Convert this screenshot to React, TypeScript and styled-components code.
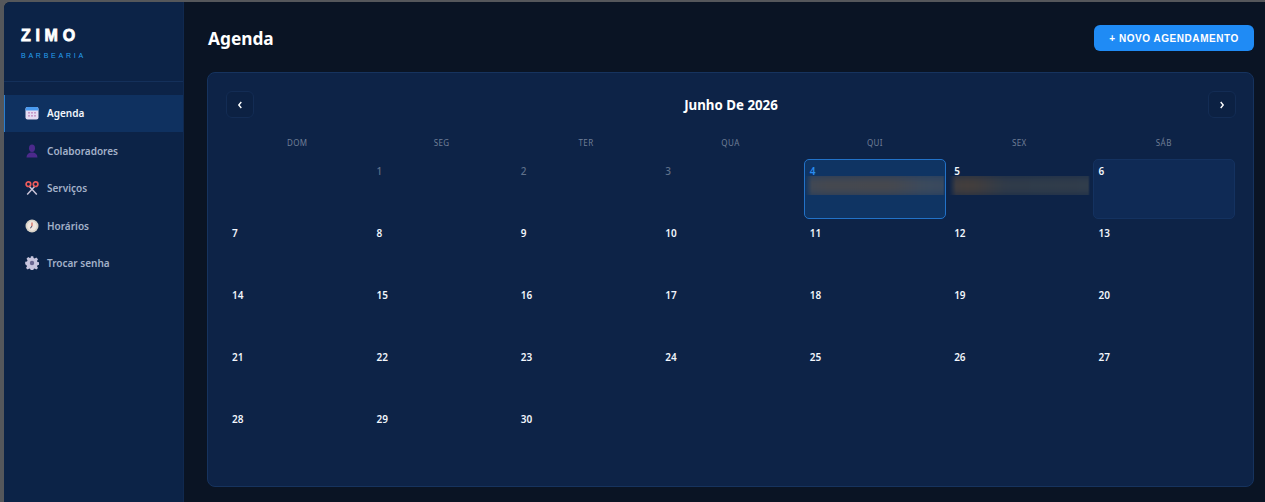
import React from "react";
import styled, { createGlobalStyle } from "styled-components";

const GlobalStyle = createGlobalStyle`
  html, body {
    margin: 0;
    padding: 0;
    height: 100%;
    overflow: hidden;
    background: #4a4c50;
  }
  #root {
    height: 100%;
  }
  * {
    box-sizing: border-box;
  }
`;

const Frame = styled.div`
  display: flex;
  width: 1265px;
  height: 502px;
  padding: 2px 0 0 4px;
  background: #55575b;
  font-family: "Noto Sans", sans-serif;
`;

const Shell = styled.div`
  display: flex;
  flex: 1;
  min-width: 0;
  border-top-left-radius: 6px;
  overflow: hidden;
  background: #0a1424;
`;

const Sidebar = styled.aside`
  width: 180px;
  flex-shrink: 0;
  background: #0c2347;
  border-right: 1px solid #10294f;
`;

const Brand = styled.div`
  height: 80px;
  padding: 25px 17px 0;
  border-bottom: 1px solid #14305a;
`;

const BrandName = styled.div`
  font-family: "Liberation Sans", sans-serif;
  font-size: 16px;
  line-height: 18px;
  font-weight: 700;
  letter-spacing: 4.7px;
  color: #ffffff;
  -webkit-text-stroke: 0.8px #ffffff;
`;

const BrandSub = styled.div`
  margin-top: 6px;
  font-family: "Liberation Sans", sans-serif;
  font-size: 7px;
  line-height: 9px;
  letter-spacing: 2.75px;
  color: #26a0f0;
`;

const Nav = styled.nav`
  display: flex;
  flex-direction: column;
  gap: 0.6px;
  padding-top: 12.6px;
`;

const NavItem = styled.div<{ $active?: boolean }>`
  display: flex;
  align-items: center;
  gap: 8px;
  height: 37px;
  padding-left: ${(p) => (p.$active ? "20px" : "21px")};
  font-size: 10px;
  font-weight: 600;
  color: ${(p) => (p.$active ? "#f2f6fc" : "#a3b1c9")};
  background: ${(p) => (p.$active ? "#0f3160" : "transparent")};
  border-left: ${(p) => (p.$active ? "1px solid #2a7fd0" : "none")};
`;

const NavIcon = styled.svg`
  width: 14px;
  height: 14px;
  flex-shrink: 0;
`;

const Main = styled.main`
  flex: 1;
  min-width: 0;
  padding: 23px 11px 15px 23px;
  display: flex;
  flex-direction: column;
  background: #0a1424;
`;

const Header = styled.header`
  display: flex;
  align-items: center;
  justify-content: space-between;
  height: 26px;
  margin-bottom: 21px;
`;

const Title = styled.h1`
  margin: 2px 0 0 1px;
  font-size: 17.3px;
  line-height: 28px;
  font-weight: 700;
  color: #ffffff;
`;

const NewButton = styled.button`
  width: 160px;
  height: 26px;
  padding: 0;
  border: none;
  border-radius: 6px;
  background: #1f8bf5;
  color: #ffffff;
  font-family: "Liberation Sans", sans-serif;
  font-size: 10px;
  font-weight: 700;
  letter-spacing: 0.55px;
`;

const Card = styled.section`
  flex: 1;
  padding: 18px 17px 0 18px;
  border: 1px solid #16335e;
  border-radius: 8px;
  background: #0d2347;
`;

const CalendarHead = styled.div`
  display: flex;
  align-items: center;
  justify-content: space-between;
  height: 27px;
  margin-bottom: 15px;
`;

const MonthLabel = styled.div`
  margin-top: 1px;
  font-size: 13.3px;
  line-height: 29px;
  font-weight: 700;
  color: #ffffff;
`;

const ArrowButton = styled.button`
  display: flex;
  align-items: center;
  justify-content: center;
  width: 28px;
  height: 27px;
  padding: 0;
  border: 1px solid #132c54;
  border-radius: 6px;
  background: #0c2143;
  color: #ffffff;
`;

const Weekdays = styled.div`
  display: grid;
  grid-template-columns: repeat(7, 1fr);
  gap: 2px;
  height: 19px;
  margin: 0 1px 7px 0;
`;

const Weekday = styled.div`
  text-align: center;
  font-size: 8px;
  line-height: 19px;
  letter-spacing: 0.4px;
  color: #6f7e96;
`;

const Days = styled.div`
  display: grid;
  grid-template-columns: repeat(7, 1fr);
  grid-auto-rows: 60px;
  gap: 2.1px 2px;
  margin-right: 1px;
`;

const Day = styled.div<{ $selected?: boolean; $today?: boolean }>`
  position: relative;
  padding: 5px 5px 0;
  border-radius: 5px;
  border: 1px solid
    ${(p) => (p.$selected ? "#2272c8" : p.$today ? "#143260" : "transparent")};
  background: ${(p) =>
    p.$selected ? "#0f3463" : p.$today ? "#0f2a55" : "transparent"};
`;

const DayNumber = styled.div<{ $muted?: boolean; $accent?: boolean }>`
  font-size: 10px;
  line-height: 12px;
  font-weight: ${(p) => (p.$muted ? 500 : 600)};
  color: ${(p) => (p.$accent ? "#2a8cf0" : p.$muted ? "#5f7089" : "#f2f6fc")};
`;

const EventBand = styled.div`
  position: absolute;
  top: 16px;
  left: 0;
  right: 0;
  height: 19px;
  overflow: hidden;
  -webkit-mask-image: linear-gradient(90deg, transparent 0%, #000 7px, #000 calc(100% - 2px), transparent 100%);
  mask-image: linear-gradient(90deg, transparent 0%, #000 7px, #000 calc(100% - 2px), transparent 100%);
`;

const EventBlur = styled.div<{ $tone: string }>`
  height: 100%;
  filter: blur(5px);
  transform: scale(1.2);
  background: ${(p) => p.$tone};
`;

type DayInfo = {
  label: string;
  muted?: boolean;
  selected?: boolean;
  today?: boolean;
  event?: string;
};

const makeDays = (): (DayInfo | null)[] => {
  const cells: (DayInfo | null)[] = [null];
  for (let d = 1; d <= 30; d++) {
    const info: DayInfo = { label: String(d) };
    if (d < 4) info.muted = true;
    if (d === 4) {
      info.selected = true;
      info.event = "linear-gradient(90deg, #3c4a5c 0%, #47494f 20%, #48494e 60%, #3d4b5d 80%, #39495e 100%)";
    }
    if (d === 5) {
      info.event = "linear-gradient(90deg, #2f3b4c 0%, #463f3c 16%, #443f3d 24%, #313c4a 42%, #323e4c 100%)";
    }
    if (d === 6) info.today = true;
    cells.push(info);
  }
  return cells;
};

const CalendarIcon = () => (
  <NavIcon viewBox="0 0 14 14">
    <rect x="0.5" y="1" width="13" height="12.5" rx="2" fill="#e4dcf2" />
    <path d="M0.5 3a2 2 0 0 1 2-2h9a2 2 0 0 1 2 2v1.5h-13z" fill="#4a9bf0" />
    <g fill="#c79ac8">
      <rect x="3" y="6" width="2" height="1.6" />
      <rect x="6" y="6" width="2" height="1.6" />
      <rect x="9" y="6" width="2" height="1.6" />
      <rect x="3" y="9" width="2" height="1.6" />
      <rect x="6" y="9" width="2" height="1.6" />
      <rect x="9" y="9" width="2" height="1.6" />
    </g>
  </NavIcon>
);

const PersonIcon = () => (
  <NavIcon viewBox="0 0 14 14">
    <ellipse cx="7" cy="4.2" rx="3" ry="3.7" fill="#4c2a8c" />
    <path d="M1.5 13.5c0-3 2.2-4.6 4.2-5h2.6c2 .4 4.2 2 4.2 5z" fill="#4c2a8c" />
  </NavIcon>
);

const ScissorsIcon = () => (
  <NavIcon viewBox="0 0 14 14">
    <path d="M4.4 5.6 11.8 13.5M9.6 5.6 2.2 13.5" stroke="#c9c2d6" strokeWidth="1.5" fill="none" />
    <circle cx="3.4" cy="3.2" r="2.3" fill="none" stroke="#ee5c5c" strokeWidth="1.7" />
    <circle cx="10.6" cy="3.2" r="2.3" fill="none" stroke="#ee5c5c" strokeWidth="1.7" />
  </NavIcon>
);

const ClockIcon = () => (
  <NavIcon viewBox="0 0 14 14">
    <circle cx="7" cy="7" r="6.5" fill="#d8d2c8" />
    <circle cx="7" cy="7" r="4.7" fill="#f0e6df" />
    <path d="M7 7V3.6" stroke="#d0584c" strokeWidth="1.1" />
    <path d="M7 7 5.4 9.2" stroke="#5a5670" strokeWidth="1.1" />
  </NavIcon>
);

const GearIcon = () => (
  <NavIcon viewBox="0 0 14 14">
    <path
      d="M5.8.3h2.4l.4 1.8 1.1.5 1.6-1 1.7 1.7-1 1.6.5 1.1 1.8.4v2.4l-1.8.4-.5 1.1 1 1.6-1.7 1.7-1.6-1-1.1.5-.4 1.8H5.8l-.4-1.8-1.1-.5-1.6 1-1.7-1.7 1-1.6-.5-1.1L.2 8.2V5.8l1.8-.4.5-1.1-1-1.6 1.7-1.7 1.6 1 1.1-.5z"
      fill="#c8c5de"
    />
    <circle cx="7" cy="7" r="2.2" fill="#6a6690" />
  </NavIcon>
);

const Chevron = ({ dir }: { dir: "left" | "right" }) => (
  <svg width="6" height="8" viewBox="0 0 6 8">
    <path
      d={dir === "left" ? "M4.3 1 1.8 4 4.3 7" : "M1.7 1 4.2 4 1.7 7"}
      fill="none"
      stroke="#ffffff"
      strokeWidth="1.4"
    />
  </svg>
);

const weekdays = ["DOM", "SEG", "TER", "QUA", "QUI", "SEX", "SÁB"];

const App = () => {
  const cells = makeDays();
  return (
    <>
      <GlobalStyle />
      <Frame>
        <Shell>
          <Sidebar>
            <Brand>
              <BrandName>ZIMO</BrandName>
              <BrandSub>BARBEARIA</BrandSub>
            </Brand>
            <Nav>
              <NavItem $active>
                <CalendarIcon />
                Agenda
              </NavItem>
              <NavItem>
                <PersonIcon />
                Colaboradores
              </NavItem>
              <NavItem>
                <ScissorsIcon />
                Serviços
              </NavItem>
              <NavItem>
                <ClockIcon />
                Horários
              </NavItem>
              <NavItem>
                <GearIcon />
                Trocar senha
              </NavItem>
            </Nav>
          </Sidebar>
          <Main>
            <Header>
              <Title>Agenda</Title>
              <NewButton>+ NOVO AGENDAMENTO</NewButton>
            </Header>
            <Card>
              <CalendarHead>
                <ArrowButton>
                  <Chevron dir="left" />
                </ArrowButton>
                <MonthLabel>Junho De 2026</MonthLabel>
                <ArrowButton>
                  <Chevron dir="right" />
                </ArrowButton>
              </CalendarHead>
              <Weekdays>
                {weekdays.map((w) => (
                  <Weekday key={w}>{w}</Weekday>
                ))}
              </Weekdays>
              <Days>
                {cells.map((c, i) =>
                  c ? (
                    <Day key={i} $selected={c.selected} $today={c.today}>
                      <DayNumber $muted={c.muted} $accent={c.selected}>
                        {c.label}
                      </DayNumber>
                      {c.event && (
                        <EventBand>
                          <EventBlur $tone={c.event} />
                        </EventBand>
                      )}
                    </Day>
                  ) : (
                    <div key={i} />
                  )
                )}
              </Days>
            </Card>
          </Main>
        </Shell>
      </Frame>
    </>
  );
};

export default App;
